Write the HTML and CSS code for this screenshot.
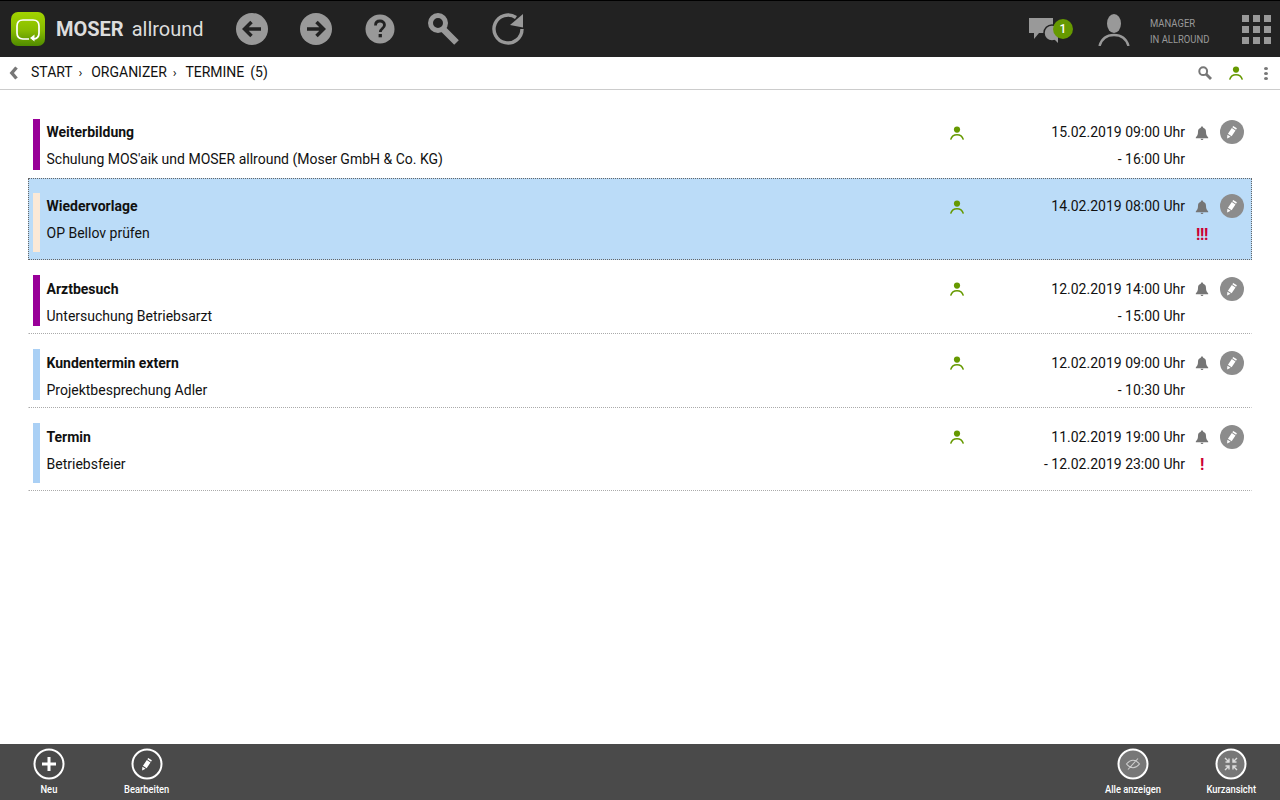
FILE: index.html
```html
<!DOCTYPE html>
<html lang="de">
<head>
<meta charset="utf-8">
<title>Termine</title>
<link rel="stylesheet" href="styles.css">
</head>
<body>
<svg class="defs" width="0" height="0" aria-hidden="true">
  <symbol id="person" viewBox="0 0 14 14">
    <circle cx="7" cy="3.600" r="3.100" fill="currentColor"/>
    <path d="M.7 13.600C1.600 10.400 4 8.800 7 8.800s5.400 1.600 6.300 4.800" fill="none" stroke="currentColor" stroke-width="1.500"/>
  </symbol>
  <symbol id="bell" viewBox="0 0 14 14">
    <path d="M7 .6c.8 0 1.200.5 1.200 1.100C10.300 2.300 11 4 11 6c0 2.800.8 4 2.200 5.400v.8H.8v-.8C2.200 10 3 8.800 3 6c0-2 .7-3.700 2.800-4.300C5.800 1.100 6.200.6 7 .6z" fill="currentColor"/>
    <path d="M5.500 12.800h3C8.300 13.600 7.700 14 7 14s-1.300-.4-1.500-1.200z" fill="currentColor"/>
  </symbol>
  <symbol id="pencil" viewBox="-.5 -.2 26 26">
    <path d="M13.800 6.200l4 2.600-.9 1.500-4-2.600zM12.300 8.500l4 2.600-4.200 6.300-4-2.600zM7.500 15.700l3.500 2.300-3.800 1.800z" fill="currentColor"/>
  </symbol>
</svg>

<header class="topbar">
  <div class="brand">
    <svg class="logo" viewBox="0 0 34 34" aria-hidden="true">
      <defs>
        <linearGradient id="logograd" x1="0" y1="0" x2="0" y2="1">
          <stop offset="0" stop-color="#a2d400"/>
          <stop offset=".55" stop-color="#86bb00"/>
          <stop offset="1" stop-color="#4f8a00"/>
        </linearGradient>
      </defs>
      <rect width="34" height="34" rx="7" fill="url(#logograd)"/>
      <path d="M18 27h-6c-4 0-6-2-6-6v-7c0-4 2-6 6-6h10c4 0 6 2 6 6v7c0 4-2 6-6 6h-1" fill="none" stroke="#fff" stroke-width="1.700"/>
      <path d="M19 26l4.500-3.500v7z" fill="#fff"/>
    </svg>
    <span class="brand-name"><b>MOSER</b> allround</span>
  </div>
  <nav class="tools">
    <button class="tool" type="button" aria-label="Zurück">
      <svg viewBox="0 0 32 32" width="32" height="32"><circle cx="16" cy="16" r="16" fill="#999"/><path d="M25 16H9M15.500 9l-7 7 7 7" fill="none" stroke="#222" stroke-width="3.500"/></svg>
    </button>
    <button class="tool" type="button" aria-label="Vor">
      <svg viewBox="0 0 32 32" width="32" height="32"><circle cx="16" cy="16" r="16" fill="#999"/><path d="M7 16h16M16.500 9l7 7-7 7" fill="none" stroke="#222" stroke-width="3.500"/></svg>
    </button>
    <button class="tool" type="button" aria-label="Hilfe">
      <svg viewBox="0 0 32 32" width="32" height="32"><circle cx="16" cy="16" r="14.500" fill="#999"/><path d="M11.500 12.500c0-3 2-4.500 4.500-4.500s4.500 1.500 4.500 4c0 3.500-4.200 3.500-4.200 7" fill="none" stroke="#222" stroke-width="2.800"/><rect x="14.600" y="21" width="3.300" height="3.300" fill="#222"/></svg>
    </button>
    <button class="tool" type="button" aria-label="Suche">
      <svg viewBox="0 0 32 32" width="32" height="32"><circle cx="10" cy="10" r="7.500" fill="none" stroke="#999" stroke-width="5"/><path d="M15.500 16.500l13 13" stroke="#999" stroke-width="6.500" fill="none"/></svg>
    </button>
    <button class="tool" type="button" aria-label="Aktualisieren">
      <svg viewBox="0 0 32 32" width="32" height="32"><path d="M24 4.500A14 14 0 1 0 30 16" fill="none" stroke="#999" stroke-width="3.400"/><path d="M31 1v13.500L18 12z" fill="#999"/></svg>
    </button>
  </nav>
  <div class="account">
    <div class="chat">
      <svg viewBox="0 0 36 28" width="36" height="28" aria-hidden="true">
        <path d="M1 3h24v15H11l-5 6v-6H1z" fill="#999"/>
        <circle cx="24" cy="18" r="8" fill="#999" stroke="#222" stroke-width="1.500"/>
        <path d="M26 24l4 4v-6z" fill="#999"/>
      </svg>
      <span class="badge">1</span>
    </div>
    <svg class="avatar" viewBox="0 0 32 32" width="32" height="32" aria-hidden="true">
      <ellipse cx="16" cy="9.500" rx="7" ry="9.500" fill="#999"/>
      <path d="M1.500 32C3.500 25 9 21 16 21S28.500 25 30.500 32" fill="none" stroke="#999" stroke-width="2.400"/>
    </svg>
    <div class="role"><span>MANAGER</span><span>IN ALLROUND</span></div>
    <div class="apps" aria-label="Apps"><i></i><i></i><i></i><i></i><i></i><i></i><i></i><i></i><i></i></div>
  </div>
</header>

<div class="crumbbar">
  <svg class="back" viewBox="0 0 10 14" width="10" height="14" aria-hidden="true"><path d="M7.500 1.500L2.800 7l4.700 5.500" fill="none" stroke="#777" stroke-width="3.400"/></svg>
  <ol class="crumbs">
    <li>START</li>
    <li class="sep">›</li>
    <li>ORGANIZER</li>
    <li class="sep">›</li>
    <li>TERMINE</li>
    <li class="count">(5)</li>
  </ol>
  <div class="crumb-tools">
    <svg viewBox="0 0 14 14" width="14" height="14" aria-hidden="true"><circle cx="5.200" cy="5.200" r="3.900" fill="none" stroke="#777" stroke-width="2"/><path d="M8 8l5 5" stroke="#777" stroke-width="2.800"/></svg>
    <svg class="icon-person" width="14" height="14" aria-hidden="true"><use href="#person"/></svg>
    <span class="dots"><i></i><i></i><i></i></span>
  </div>
</div>

<main class="list">
  <article class="row row-before-selected">
    <span class="bar bar-purple"></span>
    <div class="cells">
      <h2 class="title">Weiterbildung</h2>
      <svg class="icon-person" width="14" height="14" aria-hidden="true"><use href="#person"/></svg>
      <div class="date">15.02.2019 09:00 Uhr</div>
      <svg class="icon-bell" width="14" height="14" aria-hidden="true"><use href="#bell"/></svg>
      <button class="edit" type="button" aria-label="Bearbeiten"><svg width="24" height="24"><use href="#pencil"/></svg></button>
      <p class="desc">Schulung MOS'aik und MOSER allround (Moser GmbH &amp; Co. KG)</p>
      <div class="date date-end">- 16:00 Uhr</div>
    </div>
  </article>
  <article class="row row-selected">
    <span class="bar bar-beige"></span>
    <div class="cells">
      <h2 class="title">Wiedervorlage</h2>
      <svg class="icon-person" width="14" height="14" aria-hidden="true"><use href="#person"/></svg>
      <div class="date">14.02.2019 08:00 Uhr</div>
      <svg class="icon-bell" width="14" height="14" aria-hidden="true"><use href="#bell"/></svg>
      <button class="edit" type="button" aria-label="Bearbeiten"><svg width="24" height="24"><use href="#pencil"/></svg></button>
      <p class="desc">OP Bellov prüfen</p>
      <div class="date date-end"></div>
      <div class="prio">!!!</div>
    </div>
  </article>
  <article class="row row-lower">
    <span class="bar bar-purple"></span>
    <div class="cells">
      <h2 class="title">Arztbesuch</h2>
      <svg class="icon-person" width="14" height="14" aria-hidden="true"><use href="#person"/></svg>
      <div class="date">12.02.2019 14:00 Uhr</div>
      <svg class="icon-bell" width="14" height="14" aria-hidden="true"><use href="#bell"/></svg>
      <button class="edit" type="button" aria-label="Bearbeiten"><svg width="24" height="24"><use href="#pencil"/></svg></button>
      <p class="desc">Untersuchung Betriebsarzt</p>
      <div class="date date-end">- 15:00 Uhr</div>
    </div>
  </article>
  <article class="row row-lower">
    <span class="bar bar-blue"></span>
    <div class="cells">
      <h2 class="title">Kundentermin extern</h2>
      <svg class="icon-person" width="14" height="14" aria-hidden="true"><use href="#person"/></svg>
      <div class="date">12.02.2019 09:00 Uhr</div>
      <svg class="icon-bell" width="14" height="14" aria-hidden="true"><use href="#bell"/></svg>
      <button class="edit" type="button" aria-label="Bearbeiten"><svg width="24" height="24"><use href="#pencil"/></svg></button>
      <p class="desc">Projektbesprechung Adler</p>
      <div class="date date-end">- 10:30 Uhr</div>
    </div>
  </article>
  <article class="row row-lower">
    <span class="bar bar-blue"></span>
    <div class="cells">
      <h2 class="title">Termin</h2>
      <svg class="icon-person" width="14" height="14" aria-hidden="true"><use href="#person"/></svg>
      <div class="date">11.02.2019 19:00 Uhr</div>
      <svg class="icon-bell" width="14" height="14" aria-hidden="true"><use href="#bell"/></svg>
      <button class="edit" type="button" aria-label="Bearbeiten"><svg width="24" height="24"><use href="#pencil"/></svg></button>
      <p class="desc">Betriebsfeier</p>
      <div class="date date-end">- 12.02.2019 23:00 Uhr</div>
      <div class="prio">!</div>
    </div>
  </article>
</main>

<footer class="actions">
  <button class="action" type="button">
    <svg viewBox="0 0 32 32" width="32" height="32" aria-hidden="true"><circle cx="16" cy="16" r="14.500" fill="none" stroke="#fff" stroke-width="2"/><path d="M16 9v14M9 16h14" stroke="#fff" stroke-width="3"/></svg>
    <span class="action-label">Neu</span>
  </button>
  <button class="action" type="button">
    <svg viewBox="0 0 32 32" width="32" height="32" aria-hidden="true"><circle cx="16" cy="16" r="14.500" fill="none" stroke="#fff" stroke-width="2"/><use href="#pencil" x="4" y="4" width="24" height="24"/></svg>
    <span class="action-label">Bearbeiten</span>
  </button>
  <span class="spacer"></span>
  <button class="action" type="button">
    <svg viewBox="0 0 32 32" width="32" height="32" aria-hidden="true"><circle cx="16" cy="16" r="14.500" fill="#777" stroke="#fff" stroke-width="2"/><path d="M9.500 16c2-2.500 4-3.700 6.500-3.700s4.500 1.200 6.500 3.700c-2 2.500-4 3.700-6.500 3.700S11.500 18.500 9.500 16zM21 10.500L11 21.500" fill="none" stroke="#ccc" stroke-width="1.100"/></svg>
    <span class="action-label">Alle anzeigen</span>
  </button>
  <button class="action" type="button">
    <svg viewBox="0 0 32 32" width="32" height="32" aria-hidden="true"><circle cx="16" cy="16" r="14.500" fill="#777" stroke="#fff" stroke-width="2"/><path d="M10 10l3.500 3.500M14 10.500V14h-3.500M22 10l-3.500 3.500M18 10.500V14h3.500M10 22l3.500-3.500M14 21.500V18h-3.500M22 22l-3.500-3.500M18 21.500V18h3.500" fill="none" stroke="#ddd" stroke-width="1.400"/></svg>
    <span class="action-label">Kurzansicht</span>
  </button>
</footer>
</body>
</html>
```

FILE: styles.css
```css
* { box-sizing: border-box; }

html, body { height: 100%; }

body {
  margin: 0;
  display: flex;
  flex-direction: column;
  height: 800px;
  overflow: hidden;
  background: #fff;
  color: #111;
  font-family: Roboto, "Liberation Sans", sans-serif;
  font-size: 14px;
}

.defs { position: absolute; }

button {
  border: 0;
  padding: 0;
  background: none;
  color: inherit;
  font: inherit;
}

/* top bar */
.topbar {
  flex: none;
  height: 57px;
  display: flex;
  align-items: center;
  padding: 0 10px 0 11px;
  background: #222;
  border-top: 1px solid #000;
}

.brand { display: flex; align-items: center; width: 225px; }

.logo { width: 34px; height: 34px; flex: none; }

.brand-name {
  margin-left: 11px;
  color: #ddd;
  font-size: 20px;
  white-space: nowrap;
  word-spacing: 3px;
}

.brand-name b { font-weight: 700; }

.tools { display: flex; gap: 32px; }

.tool { display: block; width: 32px; height: 32px; }

.tool svg { display: block; }

.account { margin-left: auto; display: flex; align-items: center; }

.chat { position: relative; width: 44px; height: 30px; margin-right: 26px; }

.chat svg { display: block; margin-top: 1px; }

.badge {
  position: absolute;
  left: 25px;
  top: 5px;
  width: 20px;
  height: 20px;
  border-radius: 50%;
  background: #669900;
  color: #fff;
  font-size: 12px;
  font-weight: 500;
  line-height: 20px;
  text-align: center;
}

.avatar { margin-right: 20px; margin-top: 2px; }

.role {
  display: flex;
  flex-direction: column;
  gap: 4px;
  width: 92px;
  margin-top: 6px;
  color: #999;
  font-size: 11px;
  line-height: 12px;
}

.role span { display: block; transform: scaleX(.86); transform-origin: left center; white-space: nowrap; }

.apps {
  display: grid;
  grid-template-columns: repeat(3, 7px);
  grid-auto-rows: 7px;
  gap: 4px;
  width: 28px;
}

.apps i { background: #999; }

/* breadcrumb */
.crumbbar {
  flex: none;
  height: 33px;
  display: flex;
  align-items: center;
  padding: 0 10px 0 9px;
  border-bottom: 1px solid #ccc;
}

.back { flex: none; }

.crumbs {
  display: flex;
  align-items: center;
  margin: 0 0 2px 12px;
  padding: 0;
  list-style: none;
}

.sep { width: 18.500px; padding-right: 3px; text-align: center; font-size: 13px; }

.count { margin-left: 6px; }

.crumb-tools { margin-left: auto; display: flex; align-items: center; }

.crumb-tools > svg:first-child { margin-right: 17px; }

.dots {
  display: flex;
  flex-direction: column;
  gap: 2px;
  width: 4px;
  margin: 0 2px 0 21px;
}

.dots i { width: 4px; height: 3px; border-radius: 50%; background: #777; }

.icon-person { color: #669900; display: block; }

.icon-bell { color: #757575; display: block; }

/* list */
.list {
  flex: 1;
  padding: 14px 28px 0;
}

.row {
  display: flex;
  padding: 14px 7px 7px 4px;
  border: 1px solid transparent;
  border-bottom: 1px dotted #aaa;
}

.row-before-selected { border-bottom-color: transparent; }

.row-selected {
  background: #bbdcf8;
  border: 1px dotted #666;
}

.bar { flex: none; width: 7px; margin-right: 6px; }

.bar-purple { background: #990099; }
.bar-beige { background: #fbe9d7; }
.bar-blue { background: #aad0f5; }

.cells {
  flex: 1;
  display: grid;
  grid-template-columns: minmax(0, 1fr) 14px 221px 24px 35px;
  grid-template-rows: 27px minmax(24px, auto);
  min-width: 0;
}

.title {
  grid-column: 1;
  margin: 0 0 0 .5px;
  align-self: start;
  font-size: 14px;
  font-weight: 700;
  line-height: 27px;
}

.cells > .icon-person { grid-column: 2; align-self: center; }

.date {
  grid-column: 3;
  align-self: start;
  line-height: 27px;
  text-align: right;
  white-space: nowrap;
}

.cells > .icon-bell { grid-column: 4; margin-left: 10px; align-self: center; }

.edit {
  grid-column: 5;
  width: 24px;
  height: 24px;
  margin: 1px 0 0 11px;
  align-self: start;
  border-radius: 50%;
  background: #8c8c8c;
  color: #fff;
}

.edit svg { display: block; }

.desc {
  grid-column: 1;
  grid-row: 2;
  height: 24px;
  margin: 0 0 0 .5px;
  line-height: 27px;
}

.date-end { grid-row: 2; height: 24px; }

.prio {
  grid-column: 4;
  grid-row: 2;
  min-height: 32px;
  margin-left: 10px;
  padding-top: 1px;
  color: #cc0033;
  font-size: 16px;
  font-weight: 700;
  line-height: 27px;
  text-align: center;
  letter-spacing: -.4px;
  white-space: nowrap;
}

/* rows below the selected one sit a pixel lower against their bar */
.row-lower .title,
.row-lower .date,
.row-lower .desc { padding-top: 1px; }

.row-lower .prio { min-height: 33px; padding-top: 1px; }

.row-lower .edit { margin-top: 2px; }

/* bottom action bar */
.actions {
  flex: none;
  height: 56px;
  display: flex;
  background: #4a4a4a;
}

.spacer { flex: 1; }

.action {
  width: 98px;
  height: 56px;
  display: flex;
  flex-direction: column;
  align-items: center;
  padding-top: 4px;
  color: #fff;
}

.action svg { display: block; color: #fff; }

.action-label {
  display: block;
  margin-top: 3px;
  font-size: 11px;
  font-weight: 500;
  line-height: 14px;
  white-space: nowrap;
  transform: scaleX(.85);
}
```
